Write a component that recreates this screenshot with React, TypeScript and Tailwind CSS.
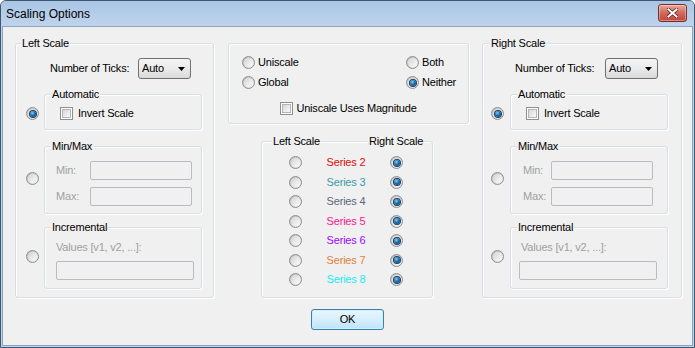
import type { ReactNode } from "react";

interface Legend {
  text: string;
  pos: string;
}

function Group({
  className,
  legends,
  children,
}: {
  className: string;
  legends?: Legend[];
  children?: ReactNode;
}) {
  return (
    <div
      className={`relative shrink-0 rounded-[3px] border border-[#d5dfe5] shadow-[inset_1px_1px_0_#ffffff,1px_1px_0_#ffffff] ${className}`}
    >
      {legends?.map((l) => (
        <span
          key={l.text}
          className={`absolute -top-[7px] bg-[#f0f0f0] px-[1px] leading-[13px] whitespace-nowrap ${l.pos}`}
        >
          {l.text}
        </span>
      ))}
      {children}
    </div>
  );
}

function Radio({ checked = false }: { checked?: boolean }) {
  return (
    <span className="flex h-[13px] w-[13px] shrink-0 items-center justify-center rounded-full border border-[#8e8f8f] bg-linear-to-br from-[#b9b9b9] to-[#f6f6f6]">
      <span className="flex h-[9px] w-[9px] items-center justify-center rounded-full bg-linear-to-br from-[#d4d4d4] to-[#fcfcfc]">
        {checked && (
          <span className="h-[6px] w-[6px] rounded-full bg-[radial-gradient(circle_at_40%_35%,#7fd2f6_0%,#1a6fb4_45%,#0a2f58_100%)] ring-1 ring-[#1f3d5c]" />
        )}
      </span>
    </span>
  );
}

function Check() {
  return (
    <span className="flex h-[13px] w-[13px] shrink-0 items-center justify-center border border-[#8e8f8f] bg-white">
      <span className="h-[9px] w-[9px] border border-[#b5b5b5] bg-linear-to-br from-[#d6d6d6] to-[#fafafa]" />
    </span>
  );
}

function Select() {
  return (
    <div className="flex h-[21px] w-[53px] items-center justify-between rounded-[3px] border border-[#707070] bg-linear-to-b from-[#f3f3f3] via-[#ebebeb] to-[#d9d9d9] pl-[3px] pr-[5px]">
      <span>Auto</span>
      <svg width="7" height="4" viewBox="0 0 7 4">
        <path d="M0 0h7L3.5 4z" fill="#000" />
      </svg>
    </div>
  );
}

function Field({ className }: { className: string }) {
  return (
    <div
      className={`h-[19px] shrink-0 rounded-[2px] border border-[#b8bcc0] bg-[#f0f0f0] ${className}`}
    />
  );
}

function ScaleBox({ side }: { side: "left" | "right" }) {
  const left = side === "left";
  return (
    <Group
      className={left ? "h-[255px] w-[199px]" : "ml-[13px] h-[255px] w-[200px]"}
      legends={[
        {
          text: left ? "Left Scale" : "Right Scale",
          pos: left ? "left-[5px]" : "left-[7px]",
        },
      ]}
    >
      <div
        className={`mt-[14px] flex h-[21px] items-center ${left ? "pl-[34px]" : "pl-[32px]"}`}
      >
        <span className={left ? "w-[88px]" : "w-[90px]"}>Number of Ticks:</span>
        <Select />
      </div>

      <div
        className={`mt-[15px] flex items-start ${left ? "gap-[5px] pl-[10px]" : "gap-[6px] pl-[8px]"}`}
      >
        <span className="mt-[13px]">
          <Radio checked />
        </span>
        <Group
          className="h-[36px] w-[158px]"
          legends={[{ text: "Automatic", pos: "left-[6px]" }]}
        >
          <div className="flex h-[13px] items-center gap-[5px] pl-[15px] mt-[12px]">
            <Check />
            <span>Invert Scale</span>
          </div>
        </Group>
      </div>

      <div
        className={`mt-[16px] flex items-start ${left ? "gap-[5px] pl-[10px]" : "gap-[6px] pl-[8px]"}`}
      >
        <span className="mt-[26px]">
          <Radio />
        </span>
        <Group
          className="h-[68px] w-[158px]"
          legends={[{ text: "Min/Max", pos: "left-[6px]" }]}
        >
          <div
            className={`pt-[14px] text-[#a0a0a0] ${left ? "pl-[11px]" : "pl-[12px]"}`}
          >
            <div className="flex items-center">
              <span className={left ? "w-[34px]" : "w-[28px]"}>Min:</span>
              <Field className="w-[102px]" />
            </div>
            <div className="mt-[7px] flex items-center">
              <span className={left ? "w-[34px]" : "w-[28px]"}>Max:</span>
              <Field className="w-[102px]" />
            </div>
          </div>
        </Group>
      </div>

      <div
        className={`mt-[13px] flex items-start ${left ? "gap-[5px] pl-[10px]" : "gap-[6px] pl-[8px]"}`}
      >
        <span className="mt-[23px]">
          <Radio />
        </span>
        <Group
          className="h-[62px] w-[158px]"
          legends={[{ text: "Incremental", pos: "left-[6px]" }]}
        >
          <div
            className={`pt-[13px] text-[#a0a0a0] ${left ? "pl-[11px]" : "pl-[8px]"}`}
          >
            <div className={`leading-[13px] ${left ? "" : "pl-[2px]"}`}>
              Values [v1, v2, ...]:
            </div>
            <Field className="mt-[7px] w-[138px]" />
          </div>
        </Group>
      </div>
    </Group>
  );
}

const series = [
  { name: "Series 2", color: "text-[#e00b0b]" },
  { name: "Series 3", color: "text-[#3a9ca8]" },
  { name: "Series 4", color: "text-[#5e6676]" },
  { name: "Series 5", color: "text-[#ff1493]" },
  { name: "Series 6", color: "text-[#9a0aff]" },
  { name: "Series 7", color: "text-[#e0803a]" },
  { name: "Series 8", color: "text-[#14ecfa]" },
];

function Option({ label, checked }: { label: string; checked?: boolean }) {
  return (
    <div className="flex h-[13px] items-center gap-[3px]">
      <Radio checked={checked} />
      <span>{label}</span>
    </div>
  );
}

export default function App() {
  return (
    <div className="flex h-[348px] w-[695px] flex-col overflow-hidden rounded-t-[6px] border border-[#3f5670] bg-[#bdd3ea] font-['Liberation_Sans',Arial,sans-serif] text-[11px] leading-[13px] tracking-[-0.2px] text-black">
      <div className="flex h-[25px] shrink-0 items-start justify-between bg-linear-to-b from-[#a9c5e4] to-[#bfd4eb] pl-[5px] pr-[7px]">
        <span className="self-center pt-[1px] text-[12px] tracking-normal">Scaling Options</span>
        <div className="mt-[3px] flex h-[18px] w-[29px] items-center justify-center rounded-[3px] border border-[#7a2e2a] bg-linear-to-b from-[#e9a99c] via-[#d0685b] to-[#c2463a] shadow-[inset_0_0_0_1px_rgba(255,255,255,0.35)]">
          <svg width="11" height="10" viewBox="0 0 11 10">
            <path d="M1.5 1.5l8 7M9.5 1.5l-8 7" stroke="#5a1f1c" strokeWidth="3.6" strokeLinecap="square" />
            <path d="M1.5 1.5l8 7M9.5 1.5l-8 7" stroke="#ffffff" strokeWidth="2" strokeLinecap="square" />
          </svg>
        </div>
      </div>

      <div className="mx-[1px] mb-[1px] flex flex-1 flex-col border border-[#8ba5c1] bg-[#f0f0f0] pl-[12px] pt-[16px]">
        <div className="flex items-start">
          <ScaleBox side="left" />

          <div className="ml-[14px] flex w-[241px] shrink-0 flex-col">
            <Group className="h-[81px] w-[241px]">
              <div className="flex pl-[13px] pt-[12px]">
                <div className="flex w-[164px] flex-col gap-[7px]">
                  <Option label="Uniscale" />
                  <Option label="Global" />
                </div>
                <div className="flex flex-col gap-[7px]">
                  <Option label="Both" />
                  <Option label="Neither" checked />
                </div>
              </div>
              <div className="mt-[13px] flex items-center justify-center gap-[3px]">
                <Check />
                <span>Uniscale Uses Magnitude</span>
              </div>
            </Group>

            <Group
              className="ml-[33px] mt-[17px] h-[157px] w-[172px]"
              legends={[
                { text: "Left Scale", pos: "left-[10px]" },
                { text: "Right Scale", pos: "left-[106px]" },
              ]}
            >
              <div className="pt-[11px]">
                {series.map((s) => (
                  <div key={s.name} className="flex h-[19.5px] items-center pl-[27px]">
                    <Radio />
                    <span className={`w-[88px] text-center ${s.color}`}>{s.name}</span>
                    <Radio checked />
                  </div>
                ))}
              </div>
            </Group>
          </div>

          <ScaleBox side="right" />
        </div>

        <div className="mt-[11px] flex justify-center pr-[12px]">
          <button className="flex h-[21px] w-[73px] items-center justify-center rounded-[3px] border border-[#3c7fb1] bg-linear-to-b from-[#eaf6fd] via-[#d7effc] to-[#bde4f8] shadow-[inset_0_0_0_1px_#cdeefd]">
            OK
          </button>
        </div>
      </div>
    </div>
  );
}
